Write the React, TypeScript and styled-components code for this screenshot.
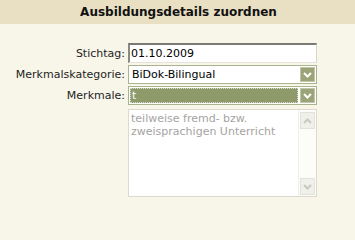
import React from "react";
import styled, { createGlobalStyle } from "styled-components";

const Global = createGlobalStyle`
  html, body { margin: 0; padding: 0; background: #f8f5e9; }
  body { width: 355px; height: 214px; overflow: hidden; }
`;

const font = `font-family: "DejaVu Sans", Verdana, sans-serif;`;

const Page = styled.div`
  width: 355px;
  height: 214px;
  background: #f8f5e9;
  ${font}
`;

const Header = styled.div`
  height: 24px;
  background: #e9e0c3;
  display: flex;
  align-items: center;
  justify-content: center;
  font-weight: bold;
  font-size: 12px;
  color: #111;
  padding-left: 2px;
`;

const Form = styled.div`
  display: grid;
  grid-template-columns: 125px 189px;
  column-gap: 3px;
  row-gap: 2px;
  padding-top: 19px;
  align-items: center;
`;

const Label = styled.div`
  text-align: right;
  font-size: 11px;
  color: #1e1e1e;
  align-self: center;
`;

const TextBox = styled.div`
  box-sizing: border-box;
  height: 20px;
  background: #fff;
  border-top: 2px solid #7a7a72;
  border-left: 2px solid #8a8a82;
  border-right: 1px solid #d8d6cc;
  border-bottom: 1px solid #e6e4da;
  font-size: 11px;
  color: #000;
  padding-left: 1px;
  display: flex;
  align-items: center;
`;

const SelectBox = styled.div`
  box-sizing: border-box;
  height: 19px;
  border: 1px solid #aab28f;
  background: #fff;
  display: flex;
  align-items: stretch;
  padding: 1px;
  gap: 2px;
`;

const SelectValue = styled.div<{ $active?: boolean }>`
  flex: 1;
  display: flex;
  align-items: center;
  font-size: 11px;
  padding-left: 2px;
  color: ${(p) => (p.$active ? "#fff" : "#000")};
  background: ${(p) => (p.$active ? "#8f9a6b" : "#fff")};
  outline: ${(p) => (p.$active ? "1px dotted #d9dcc8" : "none")};
  outline-offset: -1px;
`;

const ArrowButton = styled.div`
  width: 15px;
  box-sizing: border-box;
  background: #9aa478;
  border: 1px solid #c0c6a8;
  display: flex;
  align-items: center;
  justify-content: center;
`;

const AreaBox = styled.div`
  grid-column: 2;
  box-sizing: border-box;
  height: 88px;
  margin-top: 2px;
  border: 1px solid #dcdad0;
  background: #fff;
  display: flex;
`;

const AreaText = styled.div`
  flex: 1;
  font-size: 11px;
  line-height: 13px;
  color: #a4a4a0;
  padding: 2px 2px 0 2px;
`;

const Scrollbar = styled.div`
  width: 17px;
  background: #fcfcf8;
  display: flex;
  flex-direction: column;
  justify-content: space-between;
  padding: 2px 0 1px 0;
  border-left: 1px solid #f0efe8;
`;

const ScrollBtn = styled.div`
  height: 15px;
  margin: 0 1px;
  background: #f0f0ea;
  border: 1px solid #e2e2da;
  display: flex;
  align-items: center;
  justify-content: center;
`;

const Chevron = ({ up, color }: { up?: boolean; color: string }) => (
  <svg width="9" height="6" viewBox="0 0 9 6">
    <path
      d={up ? "M1 5 L4.5 1.5 L8 5" : "M1 1 L4.5 4.5 L8 1"}
      fill="none"
      stroke={color}
      strokeWidth="2"
    />
  </svg>
);

export default function App() {
  return (
    <Page>
      <Global />
      <Header>Ausbildungsdetails zuordnen</Header>
      <Form>
        <Label>Stichtag:</Label>
        <TextBox>01.10.2009</TextBox>
        <Label>Merkmalskategorie:</Label>
        <SelectBox>
          <SelectValue>BiDok-Bilingual</SelectValue>
          <ArrowButton>
            <Chevron color="#fff" />
          </ArrowButton>
        </SelectBox>
        <Label>Merkmale:</Label>
        <SelectBox>
          <SelectValue $active>t</SelectValue>
          <ArrowButton>
            <Chevron color="#fff" />
          </ArrowButton>
        </SelectBox>
        <AreaBox>
          <AreaText>teilweise fremd- bzw. zweisprachigen Unterricht</AreaText>
          <Scrollbar>
            <ScrollBtn>
              <Chevron up color="#c9c9c2" />
            </ScrollBtn>
            <ScrollBtn>
              <Chevron color="#c9c9c2" />
            </ScrollBtn>
          </Scrollbar>
        </AreaBox>
      </Form>
    </Page>
  );
}
